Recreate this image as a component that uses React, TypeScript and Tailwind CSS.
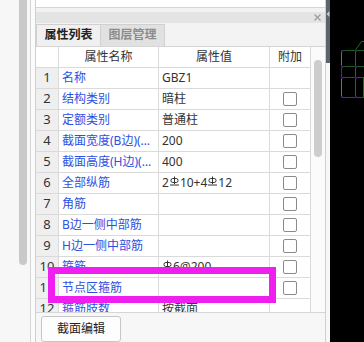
import React from 'react'

type Row = { no: string; name: string; value: React.ReactNode; check: boolean }

// HRB400 rebar mark
function Rebar() {
  return (
    <svg width="9" height="10" viewBox="0 0 9 10" className="inline-block mx-[1px] -translate-y-[2px]">
      <rect x="1" y="2.5" width="7" height="4" rx="1.8" fill="none" stroke="#333" strokeWidth="1" />
      <line x1="4.5" y1="0.5" x2="4.5" y2="8" stroke="#333" strokeWidth="1" />
      <line x1="0" y1="9" x2="9" y2="9" stroke="#333" strokeWidth="1" />
    </svg>
  )
}

const rows: Row[] = [
  { no: '1', name: '名称', value: 'GBZ1', check: false },
  { no: '2', name: '结构类别', value: '暗柱', check: true },
  { no: '3', name: '定额类别', value: '普通柱', check: true },
  { no: '4', name: '截面宽度(B边)(mm)', value: '200', check: true },
  { no: '5', name: '截面高度(H边)(mm)', value: '400', check: true },
  {
    no: '6',
    name: '全部纵筋',
    value: (
      <>
        2<Rebar />10+4<Rebar />12
      </>
    ),
    check: true,
  },
  { no: '7', name: '角筋', value: '', check: true },
  { no: '8', name: 'B边一侧中部筋', value: '', check: true },
  { no: '9', name: 'H边一侧中部筋', value: '', check: true },
  {
    no: '10',
    name: '箍筋',
    value: (
      <>
        <Rebar />6@200
      </>
    ),
    check: true,
  },
  { no: '11', name: '节点区箍筋', value: '', check: true },
  { no: '12', name: '箍筋肢数', value: '按截面', check: false },
]

const cell = 'h-[21px] border-r border-b border-[#dadada] flex items-center overflow-hidden'

export default function App() {
  return (
    <div
      className="relative w-[364px] h-[342px] overflow-hidden flex bg-[#f7f7f7] text-[12px] text-[#333]"
      style={{ fontFamily: "'Noto Sans', 'Noto Sans CJK SC', sans-serif" }}
    >
      {/* left neighbour panel edge */}
      <div className="w-[35px] flex shrink-0">
        <div className="w-[19px]" />
        <div className="w-[8px] h-[265px] bg-[#c9c9c9] rounded-b-[4px]" />
        <div className="w-[3px]" />
        <div className="w-[5px] border-l border-[#d6d6d6] bg-[#fbfbfb]" />
      </div>

      {/* property panel */}
      <div className="w-[291px] shrink-0 flex flex-col border-x border-[#d0d0d0]">
        <div className="h-[8px] bg-white border-b border-[#d4d4d4]" />
        <div className="h-[4px] bg-[#f2f2f2]" />
        <div className="h-[11px] bg-[#e4e4e4] flex items-center justify-end pr-[4px]">
          <svg width="7" height="7" viewBox="0 0 7 7">
            <path d="M0.5 0.5 L6.5 6.5 M6.5 0.5 L0.5 6.5" stroke="#9c9c9c" strokeWidth="1.2" />
          </svg>
        </div>

        {/* tabs */}
        <div className="h-[23px] bg-[#f3f3f3] flex items-end">
          <div className="w-[65px] h-[22px] border border-b-0 border-[#d0d0d0] bg-[#f0f0f0] flex items-center justify-center font-bold text-[#222]">
            属性列表
          </div>
          <div className="w-[64px] h-[22px] border border-l-0 border-b-0 border-[#d0d0d0] bg-[#e1e1e1] flex items-center justify-center font-bold text-[#8c8c8c]">
            图层管理
          </div>
        </div>

        {/* grid */}
        <div className="h-[270px] border-y border-[#d6d6d6] overflow-hidden flex bg-white">
          <div className="grid grid-cols-[23px_100px_111px_41px] content-start">
            <div className={cell} />
            <div className={`${cell} justify-center`}>属性名称</div>
            <div className={`${cell} justify-center`}>属性值</div>
            <div className={`${cell} justify-center`}>附加</div>
            {rows.map((r) => (
              <React.Fragment key={r.no}>
                <div className={`${cell} justify-center bg-[#efefef] text-[13px]`}>{r.no}</div>
                <div className={`${cell} pl-[3px] pr-[4px] text-[#2d4fe2] min-w-0`}>
                  <span className="truncate">{r.name}</span>
                </div>
                <div className={`${cell} pl-[3px] whitespace-nowrap`}>{r.value}</div>
                <div className={`${cell} justify-center`}>
                  {r.check && <div className="w-[14px] h-[14px] border border-[#8a8a8a] rounded-[2px] bg-white" />}
                </div>
              </React.Fragment>
            ))}
          </div>
          <div className="w-[14px] bg-[#fbfbfb] pt-[13px] pl-[3px]">
            <div className="w-[8px] h-[97px] rounded-[4px] bg-[#cdcdcd]" />
          </div>
        </div>

        {/* footer */}
        <div className="flex-1 pt-[3px] pl-[5px]">
          <button className="w-[80px] h-[26px] border border-[#c6c6c6] rounded-[3px] bg-[#fdfdfd] text-[12px] text-[#222] flex items-center justify-center">
            截面编辑
          </button>
        </div>
      </div>

      {/* splitter */}
      <div className="w-[4px] shrink-0 flex flex-col">
        <div className="h-[63px] bg-[#5c636c] pt-[11px]">
          <svg width="4" height="6" viewBox="0 0 4 6">
            <path d="M3.5 0 L0.5 3 L3.5 6 Z" fill="#c4c8cc" />
          </svg>
        </div>
        <div className="flex-1 bg-[#f7f7f7]" />
      </div>

      {/* drawing canvas */}
      <div className="flex-1 bg-black">
        <svg width="34" height="342" viewBox="0 0 34 342">
          <g fill="none" strokeWidth="1">
            <path d="M11.5 52 V65 M11.5 79 V96" stroke="#6e6e6e" />
            <path d="M11.5 65 V79" stroke="#1a561a" />
            <path d="M12 50.5 H34 M12 66.5 H34 M12 77.5 H34 M12 97.5 H34" stroke="#1b5f1b" />
            <path d="M25.5 50 V98 M25.5 50 L31.5 41.5 H34 M33.5 77 V98" stroke="#1e6a1e" />
          </g>
          <g fill="#45157a">
            <rect x="11" y="50" width="2" height="2" />
            <rect x="25" y="50" width="2" height="2" />
            <rect x="11" y="66" width="2" height="2" />
            <rect x="25" y="66" width="2" height="2" />
            <rect x="11" y="77" width="2" height="2" />
            <rect x="25" y="77" width="2" height="2" />
            <rect x="11" y="96" width="2" height="2" />
            <rect x="25" y="96" width="2" height="2" />
          </g>
        </svg>
      </div>

      {/* highlight mark */}
      <div className="absolute left-[48px] top-[267px] w-[228px] h-[36px] border-[7px] border-[#ef20ef]" />
    </div>
  )
}
